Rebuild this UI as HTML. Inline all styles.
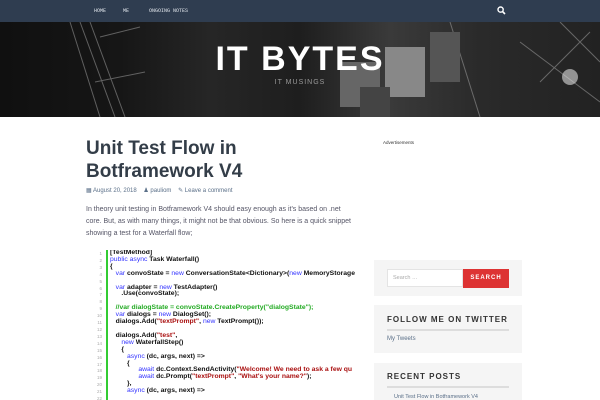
<!DOCTYPE html>
<html><head><style>
*{margin:0;padding:0;box-sizing:border-box}
html,body{width:600px;height:400px;overflow:hidden}
body{background:#fff;font-family:"Liberation Sans",sans-serif;position:relative}
.nav{position:absolute;left:0;top:0;width:600px;height:22px;background:#2f3d50}
.nav span{position:absolute;top:8px;font-family:"Liberation Mono",monospace;font-size:5px;color:#dfe4ea}
.hdr{position:absolute;left:0;top:22px;width:600px;height:95px;background:linear-gradient(90deg,#101010 0%,#161616 20%,#262626 35%,#1e1e1e 50%,#3a3a3a 65%,#2a2a2a 80%,#222 100%);overflow:hidden}
.t{position:absolute;left:0;width:600px;text-align:center;top:18px;font-size:34px;font-weight:bold;color:#fff;letter-spacing:2px}
.st{position:absolute;left:0;width:600px;text-align:center;top:57px;font-size:7px;color:#999;letter-spacing:1px}
h1{position:absolute;left:86px;top:137px;font-size:19px;line-height:23px;color:#333d48;font-weight:bold;width:260px}
.meta{position:absolute;left:86px;top:187px;font-size:6px;color:#5a6f88}
.p{position:absolute;left:86px;top:204px;width:266px;font-size:7px;line-height:12px;color:#556}
.code{position:absolute;left:88px;top:250px;width:275px;height:150px;overflow:hidden;font-size:6.8px;line-height:6.9px}
.ln{position:absolute;left:2px;top:1px;width:12px;text-align:right;color:#aaa;font-size:4.5px;line-height:6.9px}
.bar{position:absolute;left:18px;top:0;width:2px;height:150px;background:#3c3}
.cd{position:absolute;left:22px;top:0;white-space:pre;color:#111;font-weight:bold}
.k{color:#33f;font-weight:normal}.g{color:#2a2}.s{color:#a11}
.w{position:absolute;left:374px;width:148px;background:#f5f5f5}
.wh{position:absolute;left:13px;font-size:8px;font-weight:bold;letter-spacing:1px;color:#333}
.ul{position:absolute;left:13px;width:122px;height:2px;background:#ddd}
</style></head><body>
<div class="nav"><span style="left:94px">HOME</span><span style="left:123px">ME</span><span style="left:149px">ONGOING NOTES</span>
<svg style="position:absolute;left:497px;top:6px" width="9" height="9" viewBox="0 0 9 9"><circle cx="3.6" cy="3.6" r="2.6" stroke="#fff" stroke-width="1.4" fill="none"/><path d="M5.5 5.5L8 8" stroke="#fff" stroke-width="1.6"/></svg></div>
<div class="hdr">
<svg width="600" height="95" style="position:absolute;left:0;top:0"><g stroke="#aaa" stroke-width="1" opacity=".5"><path d="M70 0L100 95M80 0L115 95M90 0L125 95M100 15L140 5M95 60L145 50"/><path d="M450 0L480 95M520 20L600 80M540 60L590 10M560 0L600 40"/></g><rect x="340" y="40" width="40" height="45" fill="#666"/><rect x="385" y="25" width="40" height="50" fill="#888"/><rect x="430" y="10" width="30" height="50" fill="#555"/><rect x="360" y="65" width="30" height="30" fill="#444"/><circle cx="570" cy="55" r="8" fill="#ddd" opacity=".6"/></svg>
<div class="t">IT BYTES</div><div class="st">IT MUSINGS</div></div>
<h1>Unit Test Flow in Botframework V4</h1>
<div class="meta">▦ August 20, 2018 &nbsp;&nbsp; ♟ pauliom &nbsp;&nbsp; ✎ Leave a comment</div>
<div class="p">In theory unit testing in Botframework V4 should easy enough as it's based on .net core. But, as with many things, it might not be that obvious. So here is a quick snippet showing a test for a Waterfall flow;</div>
<div class="code"><div class="ln">1<br>2<br>3<br>4<br>5<br>6<br>7<br>8<br>9<br>10<br>11<br>12<br>13<br>14<br>15<br>16<br>17<br>18<br>19<br>20<br>21<br>22</div><div class="bar"></div>
<div class="cd">[TestMethod]
<span class="k">public async</span> Task Waterfall()
{
   <span class="k">var</span> convoState = <span class="k">new</span> ConversationState&lt;Dictionary&gt;(<span class="k">new</span> MemoryStorage

   <span class="k">var</span> adapter = <span class="k">new</span> TestAdapter()
      .Use(convoState);

   <span class="g">//var dialogState = convoState.CreateProperty("dialogState");</span>
   <span class="k">var</span> dialogs = <span class="k">new</span> DialogSet();
   dialogs.Add(<span class="s">"textPrompt"</span>, <span class="k">new</span> TextPrompt());

   dialogs.Add(<span class="s">"test"</span>,
      <span class="k">new</span> WaterfallStep()
      {
         <span class="k">async</span> (dc, args, next) =&gt;
         {
               <span class="k">await</span> dc.Context.SendActivity(<span class="s">"Welcome! We need to ask a few qu</span>
               <span class="k">await</span> dc.Prompt(<span class="s">"textPrompt"</span>, <span class="s">"What's your name?"</span>);
         },
         <span class="k">async</span> (dc, args, next) =&gt;</div></div>
<div style="position:absolute;left:383px;top:140px;font-size:4.5px;color:#333">Advertisements</div>
<div class="w" style="top:260px;height:36px"><div style="position:absolute;left:13px;top:9px;width:76px;height:18px;background:#fff;border:1px solid #e4e4e4;font-size:5.5px;color:#aaa;padding:5px 5px">Search …</div><div style="position:absolute;left:89px;top:9px;width:46px;height:19px;background:#dd3333;color:#fff;font-size:6px;font-weight:bold;letter-spacing:1px;text-align:center;line-height:19px">SEARCH</div></div>
<div class="w" style="top:305px;height:48px"><div class="wh" style="top:10px">FOLLOW ME ON TWITTER</div><div class="ul" style="top:24px"></div><div style="position:absolute;left:13px;top:31px;font-size:6px;color:#5a6f88">My Tweets</div></div>
<div class="w" style="top:363px;height:37px"><div class="wh" style="top:9px">RECENT POSTS</div><div class="ul" style="top:23px"></div><div style="position:absolute;left:20px;top:31px;font-size:5.5px;color:#5a6f88">Unit Test Flow in Botframework V4</div></div>
</body></html>
